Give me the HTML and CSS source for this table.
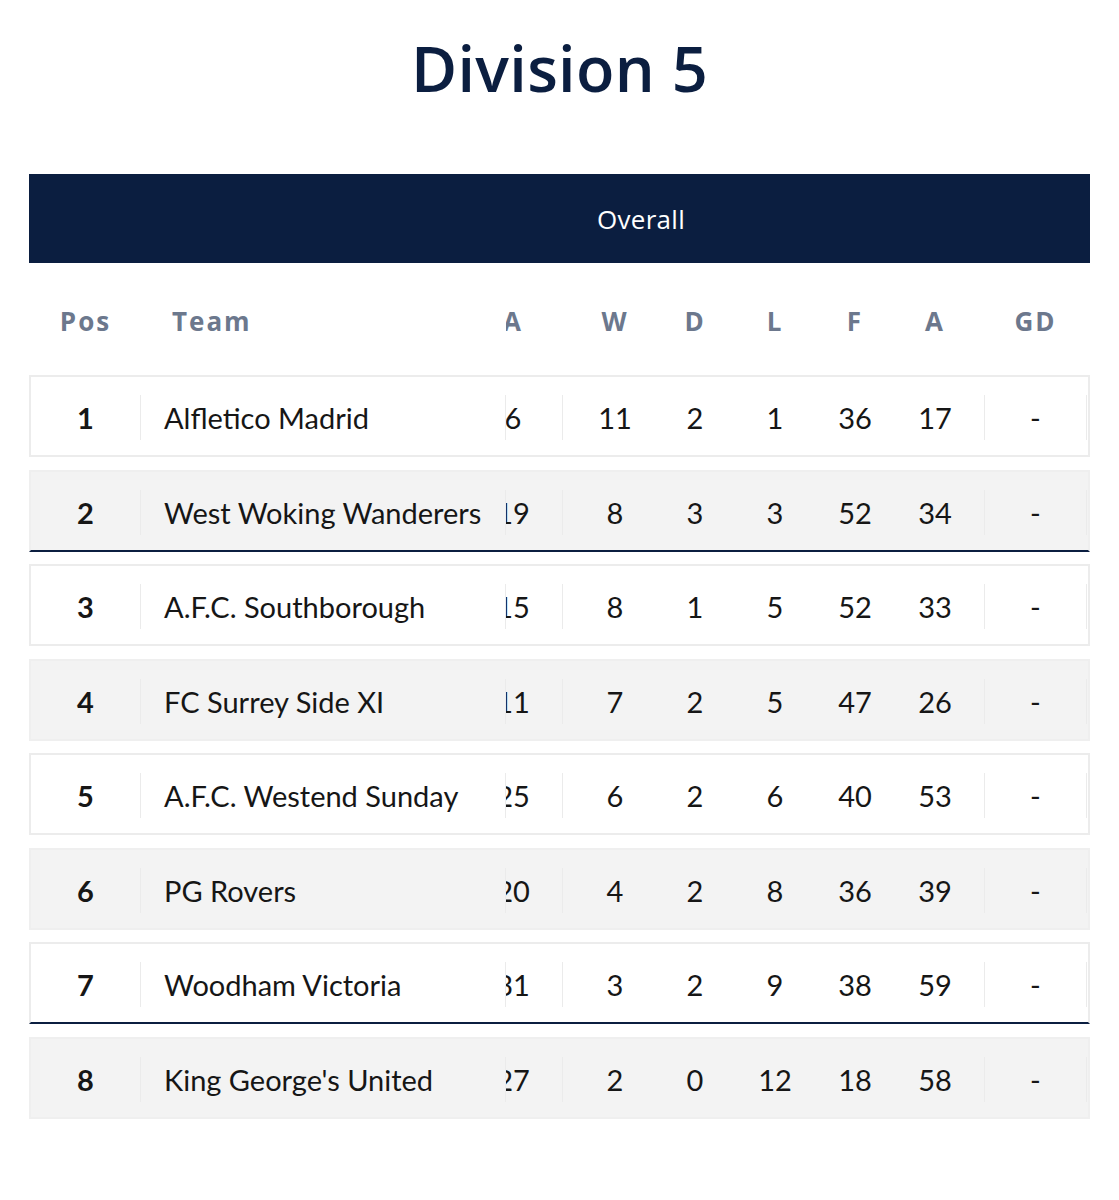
FILE: index.html
```html
<!DOCTYPE html>
<html lang="en">
<head>
<meta charset="utf-8">
<title>Division 5</title>
<link rel="stylesheet" href="styles.css">
</head>
<body>
<main class="page">
  <h1 class="title">Division 5</h1>
  <section class="table">
    <div class="group-bar"><span class="group-label">Overall</span></div>
    <div class="head-row">
      <div class="c-pos">Pos</div>
      <div class="c-team">Team</div>
      <div class="c-cut"><span class="cut-in">A</span></div>
      <div class="c-stats">
        <span class="c-n">W</span><span class="c-n">D</span><span class="c-n">L</span><span class="c-n">F</span><span class="c-n">A</span>
      </div>
      <div class="c-gd">GD</div>
    </div>
    <div class="rows">
      <div class="row">
        <div class="c-pos">1</div><div class="c-team">Alfletico Madrid</div><div class="c-cut"><span class="cut-in">6</span></div>
        <div class="c-stats"><span class="c-n">11</span><span class="c-n">2</span><span class="c-n">1</span><span class="c-n">36</span><span class="c-n">17</span></div>
        <div class="c-gd">-</div><div class="c-tail"></div>
      </div>
      <div class="row alt line">
        <div class="c-pos">2</div><div class="c-team">West Woking Wanderers</div><div class="c-cut"><span class="cut-in">19</span></div>
        <div class="c-stats"><span class="c-n">8</span><span class="c-n">3</span><span class="c-n">3</span><span class="c-n">52</span><span class="c-n">34</span></div>
        <div class="c-gd">-</div><div class="c-tail"></div>
      </div>
      <div class="row">
        <div class="c-pos">3</div><div class="c-team">A.F.C. Southborough</div><div class="c-cut"><span class="cut-in">15</span></div>
        <div class="c-stats"><span class="c-n">8</span><span class="c-n">1</span><span class="c-n">5</span><span class="c-n">52</span><span class="c-n">33</span></div>
        <div class="c-gd">-</div><div class="c-tail"></div>
      </div>
      <div class="row alt">
        <div class="c-pos">4</div><div class="c-team">FC Surrey Side XI</div><div class="c-cut"><span class="cut-in">11</span></div>
        <div class="c-stats"><span class="c-n">7</span><span class="c-n">2</span><span class="c-n">5</span><span class="c-n">47</span><span class="c-n">26</span></div>
        <div class="c-gd">-</div><div class="c-tail"></div>
      </div>
      <div class="row">
        <div class="c-pos">5</div><div class="c-team">A.F.C. Westend Sunday</div><div class="c-cut"><span class="cut-in">25</span></div>
        <div class="c-stats"><span class="c-n">6</span><span class="c-n">2</span><span class="c-n">6</span><span class="c-n">40</span><span class="c-n">53</span></div>
        <div class="c-gd">-</div><div class="c-tail"></div>
      </div>
      <div class="row alt">
        <div class="c-pos">6</div><div class="c-team">PG Rovers</div><div class="c-cut"><span class="cut-in">20</span></div>
        <div class="c-stats"><span class="c-n">4</span><span class="c-n">2</span><span class="c-n">8</span><span class="c-n">36</span><span class="c-n">39</span></div>
        <div class="c-gd">-</div><div class="c-tail"></div>
      </div>
      <div class="row line">
        <div class="c-pos">7</div><div class="c-team">Woodham Victoria</div><div class="c-cut"><span class="cut-in">31</span></div>
        <div class="c-stats"><span class="c-n">3</span><span class="c-n">2</span><span class="c-n">9</span><span class="c-n">38</span><span class="c-n">59</span></div>
        <div class="c-gd">-</div><div class="c-tail"></div>
      </div>
      <div class="row alt">
        <div class="c-pos">8</div><div class="c-team">King George's United</div><div class="c-cut"><span class="cut-in">27</span></div>
        <div class="c-stats"><span class="c-n">2</span><span class="c-n">0</span><span class="c-n">12</span><span class="c-n">18</span><span class="c-n">58</span></div>
        <div class="c-gd">-</div><div class="c-tail"></div>
      </div>
    </div>
  </section>
</main>
</body>
</html>
```

FILE: styles.css
```css
* { box-sizing: border-box; }

html, body {
  margin: 0;
  padding: 0;
  background: #ffffff;
}

body {
  font-family: Lato, "Open Sans", "Liberation Sans", sans-serif;
  color: #161616;
}

.page {
  width: 1119px;
  padding: 30px 29px 60px;
}

.title {
  margin: 0;
  text-align: center;
  font-family: "Open Sans", "Liberation Sans", sans-serif;
  font-weight: 600;
  font-size: 63px;
  line-height: 76px;
  color: #0b1e40;
  letter-spacing: 0.3px;
}

.table {
  margin-top: 68px;
  width: 1061px;
}

.group-bar {
  height: 89px;
  background: #0b1e40;
  display: flex;
  align-items: center;
  justify-content: center;
  padding-left: 163px;
}

.group-label {
  color: #ffffff;
  font-family: "Open Sans", "Liberation Sans", sans-serif;
  font-size: 26px;
  letter-spacing: 0.3px;
}

.head-row {
  height: 112px;
  display: flex;
  align-items: center;
  padding: 4px 2px 0;
  color: #6c788d;
  font-family: "Open Sans", "Liberation Sans", sans-serif;
  font-weight: 700;
  font-size: 26px;
  letter-spacing: 2px;
}

.head-row .c-team { padding-left: 31px; }
.head-row .c-team,
.head-row .c-cut,
.head-row .c-stats,
.head-row .c-gd { border-left-color: transparent; }

.rows {
  display: flex;
  flex-direction: column;
  gap: 12.57px;
}

.row {
  height: 82px;
  display: flex;
  align-items: stretch;
  border: 2px solid #ececec;
  padding: 18px 0 15px;
  background: #ffffff;
  font-size: 29px;
}

.row.alt { background: #f3f3f3; border-color: #efefef; }
.row.line { border-bottom-color: #0b1e40; }

.c-pos {
  width: 109px;
  flex: none;
  display: flex;
  align-items: center;
  justify-content: center;
}

.row .c-pos { font-weight: 700; }

.c-team {
  width: 365px;
  flex: none;
  display: flex;
  align-items: center;
  padding-left: 23px;
  border-left: 1px solid #ebebeb;
  white-space: nowrap;
  overflow: hidden;
}

.c-cut {
  width: 57px;
  flex: none;
  display: flex;
  align-items: center;
  overflow: hidden;
  border-left: 1px solid #ebebeb;
}

.cut-in {
  flex: none;
  display: block;
  width: 100px;
  margin-left: -43px;
  text-align: center;
}

.c-stats {
  width: 422px;
  flex: none;
  display: flex;
  align-items: center;
  padding-left: 12px;
  border-left: 1px solid #ebebeb;
}

.c-n {
  width: 80px;
  flex: none;
  text-align: center;
}

.c-gd {
  width: 102px;
  flex: none;
  display: flex;
  align-items: center;
  justify-content: center;
  border-left: 1px solid #ebebeb;
}

.c-tail {
  flex: 1;
  border-left: 1px solid #ebebeb;
}
```
